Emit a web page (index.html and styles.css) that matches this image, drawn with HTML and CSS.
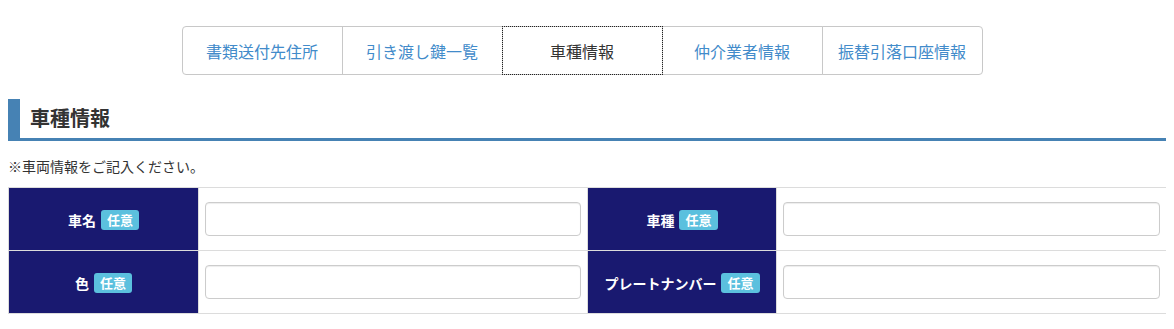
FILE: index.html
```html
<!DOCTYPE html>
<html lang="ja">
<head>
<meta charset="utf-8">
<title>車種情報</title>
<link rel="stylesheet" href="styles.css">
</head>
<body>
<nav class="tabs">
  <a class="tab" href="#">書類送付先住所</a>
  <a class="tab" href="#">引き渡し鍵一覧</a>
  <a class="tab active" href="#">車種情報</a>
  <a class="tab" href="#">仲介業者情報</a>
  <a class="tab" href="#">振替引落口座情報</a>
</nav>
<h2 class="section-title">車種情報</h2>
<p class="note">※車両情報をご記入ください。</p>
<table class="form-table">
  <colgroup>
    <col class="c-th1"><col class="c-td1"><col class="c-th2"><col class="c-td2">
  </colgroup>
  <tr>
    <th><span class="label">車名</span><span class="badge">任意</span></th>
    <td><input class="field" type="text"></td>
    <th><span class="label">車種</span><span class="badge">任意</span></th>
    <td><input class="field" type="text"></td>
  </tr>
  <tr>
    <th><span class="label">色</span><span class="badge">任意</span></th>
    <td><input class="field" type="text"></td>
    <th><span class="label">プレートナンバー</span><span class="badge">任意</span></th>
    <td><input class="field" type="text"></td>
  </tr>
</table>
</body>
</html>
```

FILE: styles.css
```css
html, body {
  margin: 0;
  padding: 0;
  background: #fff;
}
body {
  margin: 8px;
  font-family: "Noto Sans CJK JP", "Noto Sans", sans-serif;
  color: #333;
  font-size: 14px;
}
.tabs {
  display: flex;
  justify-content: center;
  padding-right: 10px;
  margin-top: 18px;
}
.tab {
  width: 161px;
  height: 49px;
  box-sizing: border-box;
  border: 1px solid #c8c8c8;
  display: flex;
  align-items: center;
  justify-content: center;
  font-size: 16px;
  color: #428bca;
  text-decoration: none;
  background: #fff;
  margin-left: -1px;
}
.tab:first-child {
  margin-left: 0;
  border-radius: 4px 0 0 4px;
}
.tab:last-child {
  border-radius: 0 4px 4px 0;
}
.tab.active {
  color: #333;
  outline: 1px dotted #222;
  outline-offset: -1px;
  position: relative;
  z-index: 1;
}
.section-title {
  margin: 24px 0 0 0;
  height: 39px;
  border-left: 12px solid #4682b4;
  border-bottom: 3px solid #4682b4;
  padding-left: 10px;
  font-size: 20px;
  font-weight: bold;
  line-height: 38px;
  color: #333;
}
.note {
  margin: 15px 0 11px 0;
  font-size: 14px;
  line-height: 20px;
  color: #333;
}
.form-table {
  width: 100%;
  border-collapse: collapse;
  table-layout: fixed;
}
.c-th1 { width: 190px; }
.c-td1 { width: 389px; }
.c-th2 { width: 189px; }
.c-td2 { width: 390px; }
.form-table th,
.form-table td {
  border: 1px solid #dcdcdc;
}
.form-table th {
  background: #191970;
  color: #fff;
  font-size: 14px;
  font-weight: bold;
  text-align: center;
  padding: 0 6px;
}
.form-table td {
  padding: 14px 6px;
}
.label {
  vertical-align: middle;
}
.badge {
  display: inline-block;
  vertical-align: middle;
  margin-left: 5px;
  background: #5bc0de;
  color: #fff;
  font-size: 13px;
  font-weight: bold;
  line-height: 20px;
  height: 20px;
  padding: 0 6px;
  border-radius: 3px;
}
.field {
  display: block;
  width: 100%;
  height: 34px;
  box-sizing: border-box;
  border: 1px solid #ccc;
  border-radius: 4px;
  box-shadow: inset 0 1px 1px rgba(0,0,0,0.075);
  margin: 0;
  padding: 6px 12px;
  font-size: 14px;
  background: #fff;
}
```
